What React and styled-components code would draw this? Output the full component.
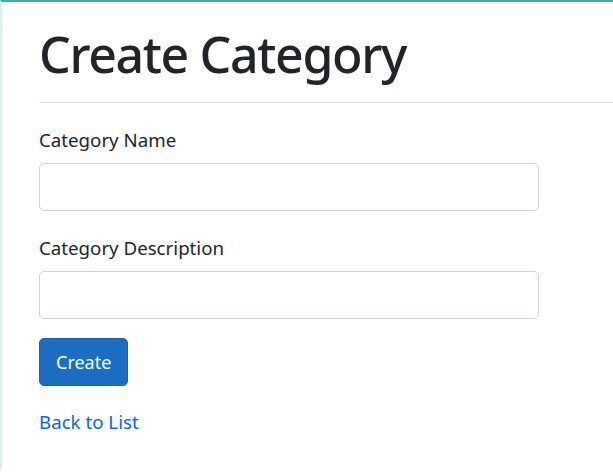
import React from 'react';
import styled, { createGlobalStyle } from 'styled-components';

const GlobalStyle = createGlobalStyle`
    html, body {
        margin: 0;
        padding: 0;
        background: #ffffff;
    }
    body {
        font-family: "Noto Sans", "Open Sans", sans-serif;
        color: #212529;
        border-top: 2px solid #3aafa2;
        border-left: 2px solid #d6f2f0;
        min-height: 470px;
        box-sizing: border-box;
    }
`;

const Page = styled.main`
    padding: 22px 0 0 37px;
`;

const Title = styled.h1`
    margin: 0;
    font-size: 50px;
    font-weight: 500;
    line-height: 60px;
    letter-spacing: -1.35px;
    padding-bottom: 18px;
    border-bottom: 1px solid #e3e3e3;
`;

const Form = styled.form`
    width: 500px;
    padding-top: 23px;
    display: flex;
    flex-direction: column;
`;

const Field = styled.div`
    display: flex;
    flex-direction: column;
    margin-bottom: ${props => props.last ? '19px' : '23px'};
`;

const Label = styled.label`
    font-size: 18.7px;
    line-height: 28px;
    margin-bottom: 9px;
`;

const Input = styled.input`
    height: 48px;
    box-sizing: border-box;
    border: 1px solid #ced4da;
    border-radius: 5px;
    padding: 8px 16px;
    font-size: 18px;
    font-family: inherit;
    outline: none;
`;

const Button = styled.button`
    align-self: flex-start;
    height: 48px;
    padding: 0 16px;
    font-family: inherit;
    font-size: 18px;
    color: #ffffff;
    background-color: #1b6ec2;
    border: 1px solid #1861ac;
    border-radius: 5px;
    cursor: pointer;
`;

const BackLink = styled.a`
    display: inline-block;
    margin-top: 22px;
    font-size: 18.7px;
    line-height: 28px;
    color: #0d66d6;
    text-decoration: none;
`;

export default function App() {
    return (
        <>
            <GlobalStyle />
            <Page>
                <Title>Create Category</Title>
                <Form onSubmit={e => e.preventDefault()}>
                    <Field>
                        <Label>Category Name</Label>
                        <Input type="text" />
                    </Field>
                    <Field last={true}>
                        <Label>Category Description</Label>
                        <Input type="text" />
                    </Field>
                    <Button type="submit">Create</Button>
                </Form>
                <BackLink href="#">Back to List</BackLink>
            </Page>
        </>
    );
}
